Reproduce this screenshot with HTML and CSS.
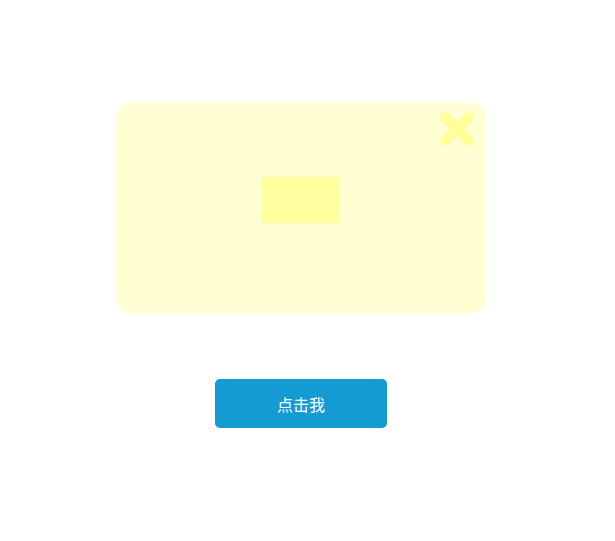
FILE: index.html
```html
<!DOCTYPE html>
<html lang="zh">
<head>
<meta charset="utf-8">
<link rel="stylesheet" href="styles.css">
</head>
<body>
<div class="page">
  <div class="card">
    <svg class="close" width="36" height="36" viewBox="0 0 36 36">
      <path d="M6 6 L30 30 M30 6 L6 30" stroke="#ffff99" stroke-width="10" stroke-linecap="round" fill="none"/>
    </svg>
    <div class="box"></div>
  </div>
  <button class="btn">点击我</button>
</div>
</body>
</html>
```
FILE: styles.css
```css
html, body {
  margin: 0;
  padding: 0;
  background: #ffffff;
}
.page {
  width: 602px;
  padding-top: 103px;
  display: flex;
  flex-direction: column;
  align-items: center;
  font-family: "Noto Sans CJK SC", "Noto Sans", sans-serif;
}
.card {
  position: relative;
  width: 370px;
  height: 210px;
  background: #ffffd3;
  border-radius: 15px;
  display: flex;
  justify-content: center;
  align-items: flex-start;
  box-sizing: border-box;
  padding-top: 74px;
}
.box {
  width: 78px;
  height: 46px;
  background: #ffffa0;
}
.close {
  position: absolute;
  top: 111px;
  top: 8px;
  right: 11px;
}
.btn {
  margin-top: 66px;
  width: 172px;
  height: 49px;
  border: none;
  border-radius: 5px;
  background: #149bd4;
  color: #ffffff;
  font-family: "Noto Sans CJK SC", "Noto Sans", sans-serif;
  font-size: 16px;
  padding: 0;
}
```
